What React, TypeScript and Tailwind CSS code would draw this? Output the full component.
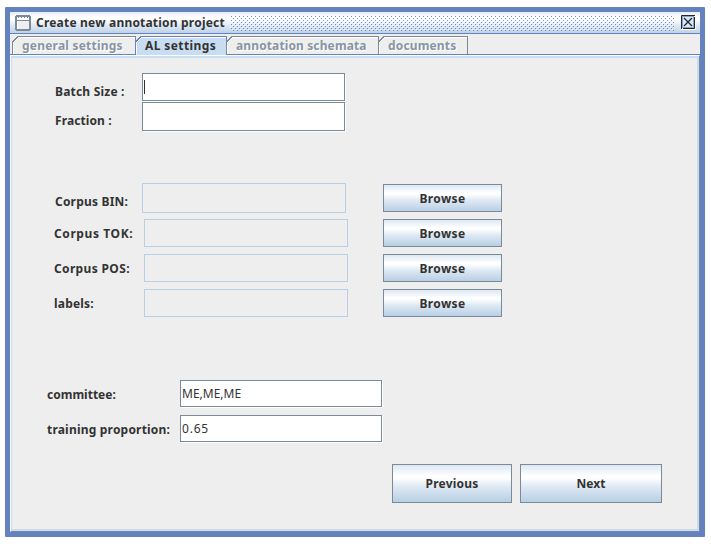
import React from "react";

const bevel =
  "relative border border-[#7a8a99] bg-white shadow-[1px_1px_0_#ffffff]";
const disabledField = "border border-[#b8cfe5] bg-[#eeeeee]";
const buttonFill =
  "flex justify-center border border-[#7a8a99] bg-[linear-gradient(to_bottom,#dde8f3_0%,#ffffff_30%,#ffffff_35%,#dde8f3_60%,#b8cfe5_100%)]";

function Tab({ width, active, children }: { width: number; active?: boolean; children: React.ReactNode }) {
  return (
    <div className="relative h-[19px] shrink-0" style={{ width }}>
      <svg className="absolute left-0 top-0 overflow-visible" width={width} height={19} shapeRendering="crispEdges">
        {active && <path d={`M0.5 19V6.5L6.5 0.5H${width}V19Z`} fill="#c8ddf2" />}
        <path d={`M0.5 18.5V6L6 0.5H${width + 0.5}V18`} fill="none" stroke={active ? "#6382bf" : "#7a8a99"} />
        <path d={`M1.5 18V6.5L6.5 1.5H${width}`} fill="none" stroke="#ffffff" />
      </svg>
      {children}
    </div>
  );
}

function Browse() {
  return (
    <button className={`${buttonFill} h-7 w-[119px] pt-[6px]`}>
      <span className="tracking-[0.4px]">Browse</span>
    </button>
  );
}

const corpusRows = [
  { label: "Corpus TOK:", spacing: "tracking-[0.6px]" },
  { label: "Corpus POS:", spacing: "tracking-[0.35px]" },
  { label: "labels:", spacing: "tracking-[0.2px]" },
];

const disabledTabText = "relative left-[10px] top-[2px] text-[#8795a4] [text-shadow:1px_1px_0_#ffffff]";

export default function App() {
  return (
    <div className="h-[544px] w-[711px] bg-white pl-[5px] pt-[7px] font-['Noto_Sans','Liberation_Sans',sans-serif] text-[12px] font-bold leading-4 text-[#333333]">
      <div className="flex h-[530px] w-[700px] flex-col rounded-[1px] border-5 border-[#6382bf] bg-[#eeeeee] whitespace-nowrap">
        <header className="flex h-[22px] shrink-0 items-start border-b border-[#6382bf] bg-[linear-gradient(to_bottom,#e4edf6_0%,#ffffff_25%,#ffffff_35%,#dde8f3_65%,#bed3e8_100%)]">
          <svg className="ml-[5px] mt-[3px] shrink-0" width="16" height="16" shapeRendering="crispEdges">
            <path d="M1 0H15V1H16V15H15V16H1V15H0V1H1Z" fill="#7a8a99" />
            <rect x="2" y="2" width="12" height="12" fill="#ffffff" />
            <rect x="3" y="6" width="11" height="8" fill="#eeeeee" />
            <path d="M3 2.5H14" stroke="#7a8a99" strokeDasharray="1 2" />
            <path d="M2 5.5H14" stroke="#7a8a99" />
          </svg>
          <span className="ml-[5px] mt-[3px] w-[194px] shrink-0 tracking-[0.2px]">Create new annotation project</span>
          <svg className="mt-[3px] shrink-0" width="444" height="16" shapeRendering="crispEdges">
            <defs>
              <pattern id="bumps" width="4" height="4" patternUnits="userSpaceOnUse">
                <path d="M1 1h1v1H1zM3 3h1v1H3z" fill="#6f8cc4" />
                <path d="M0 0h1v1H0zM2 2h1v1H2z" fill="#ffffff" />
              </pattern>
            </defs>
            <rect width="444" height="16" fill="url(#bumps)" />
          </svg>
          <svg className="ml-[7px] mt-[3px] shrink-0" width="15" height="15">
            <rect x="0.5" y="0.5" width="14" height="14" fill="#dde8f3" stroke="#ffffff" />
            <path d="M0.5 14V0.5H14M2 13.5H13.5V2" fill="none" stroke="#202838" />
            <rect x="1.5" y="1.5" width="11" height="11" fill="none" stroke="#8ba3c4" />
            <path d="M3 3L11 11M11 3L3 11" stroke="#202838" strokeWidth="1.3" />
          </svg>
        </header>
        <nav className="mt-[2px] flex h-[19px] shrink-0 border-b border-[#6382bf] pl-[2px]">
          <Tab width={123}><span className={`${disabledTabText} tracking-[0.22px]`}>general settings</span></Tab>
          <Tab width={91} active><span className="relative left-[10px] top-[2px] tracking-[0.4px]">AL settings</span></Tab>
          <Tab width={152}><span className={`${disabledTabText} tracking-[0.12px]`}>annotation schemata</span></Tab>
          <Tab width={89}><span className={`${disabledTabText} tracking-[0.15px]`}>documents</span></Tab>
        </nav>
        <div className="flex flex-1 border border-l-white border-t-white border-r-[#7a8a99] border-b-[#7a8a99]">
          <main className="flex flex-1 flex-col border-l border-r-2 border-y-2 border-[#c8ddf2]">
            <div className="mt-[15px] flex h-7 pl-[43px]">
              <span className="mt-[11px] w-[87px] tracking-[0.2px]">Batch Size :</span>
              <div className={`${bevel} h-7 w-[203px]`}><i className="absolute left-px top-[6px] h-[14px] w-px bg-[#333333]" /></div>
            </div>
            <div className="mt-px flex h-[29px] pl-[43px]">
              <span className="mt-[11px] w-[87px] tracking-[0.1px]">Fraction :</span>
              <div className={`${bevel} h-[29px] w-[203px]`} />
            </div>
            <div className="mt-[52px] flex h-[30px] pl-[43px]">
              <span className="mt-[11px] w-[87px] tracking-[0.2px]">Corpus BIN:</span>
              <div className={`${disabledField} mr-[37px] w-[204px]`} />
              <div className="pt-px"><Browse /></div>
            </div>
            <div className="mt-[6px] flex flex-col gap-[7px] pl-[42px]">
              {corpusRows.map(({ label, spacing }) => (
                <div key={label} className="flex h-7">
                  <span className={`mt-[7px] w-[90px] ${spacing}`}>{label}</span>
                  <div className={`${disabledField} mr-[35px] w-[204px]`} />
                  <Browse />
                </div>
              ))}
            </div>
            <div className="mt-[63px] flex h-[27px] pl-[35px]">
              <span className="mt-[7px] w-[133px]">committee:</span>
              <div className={`${bevel} w-[202px] pl-px pt-[5px] font-normal`}>ME,ME,ME</div>
            </div>
            <div className="mt-[8px] flex h-[27px] pl-[35px]">
              <span className="mt-[7px] w-[133px] tracking-[0.2px]">training proportion:</span>
              <div className={`${bevel} w-[202px] pl-px pt-[5px] font-normal tracking-[0.8px]`}>0.65</div>
            </div>
            <div className="mt-[22px] flex gap-2 pl-[380px]">
              <button className={`${buttonFill} h-[39px] w-[120px] pt-[11px] tracking-[0.2px]`}>Previous</button>
              <button className={`${buttonFill} h-[39px] w-[142px] pt-[11px]`}>Next</button>
            </div>
          </main>
        </div>
      </div>
    </div>
  );
}
